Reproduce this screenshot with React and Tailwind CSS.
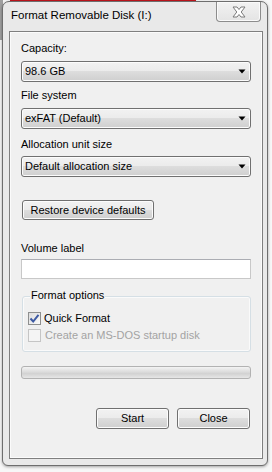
import React from "react";

const btn =
  "border border-[#707070] rounded-[3px] bg-[linear-gradient(#f2f2f2,#ebebeb_50%,#dddddd_50%,#cfcfcf)] shadow-[inset_0_0_0_1px_#fcfcfc]";

function Combo({ value, mt }) {
  return (
    <div className={`${mt} flex h-[21px] items-center justify-between ${btn} pl-[3px] pr-[4px]`}>
      <span className="whitespace-nowrap">{value}</span>
      <svg width="8" height="5" viewBox="0 0 8 5">
        <path d="M0.5 0.5 H7.5 L4 4.5 Z" fill="#000" />
      </svg>
    </div>
  );
}

function Label({ children, mt }) {
  return <div className={`${mt} h-[15px] whitespace-nowrap`}>{children}</div>;
}

export default function App() {
  return (
    <div className="relative w-[272px] h-[472px] overflow-hidden bg-[#f7f7f7] font-['Liberation_Sans',Arial,sans-serif] text-[11px] leading-[15px] text-black">
      <div className="absolute left-[10px] top-0 h-[3px] w-[186px] bg-[#c3141c] shadow-[0_1px_2px_rgba(120,0,0,0.4)]" />
      <div className="absolute left-0 top-0 h-[40px] w-[3px] bg-[#a0a0a0]" />
      <div className="relative ml-[2px] mt-[1px] flex h-[465px] w-[266px] flex-col rounded-t-[7px] rounded-b-[6px] border border-[#6e6e6e] bg-[#e9e9e9] pl-[6px] pr-[4px] pb-[6px] shadow-[0_1px_3px_rgba(0,0,0,0.35)]">
        <div className="flex h-[29px] items-start justify-between">
          <div className="ml-[2px] mt-[6px] whitespace-nowrap text-[11.5px]">Format Removable Disk (I:)</div>
          <div className="mr-[2px] flex h-[20px] w-[45px] items-center justify-center rounded-b-[4px] border border-t-0 border-[#8c8c8c] bg-[linear-gradient(#f2f2f2,#e4e4e4)] shadow-[inset_0_0_0_1px_#fafafa]">
            <svg width="14" height="12" viewBox="0 0 14 12">
              <path
                d="M1 1 H5 L7 3.5 L9 1 H13 L9.2 6 L13 11 H9 L7 8.5 L5 11 H1 L4.8 6 Z"
                fill="#fff"
                stroke="#7a7a7a"
                strokeWidth="1"
                strokeLinejoin="round"
              />
            </svg>
          </div>
        </div>
        <div className="flex flex-1 flex-col border border-[#7f7f7f] bg-[#f0f0f0] px-[11px] shadow-[inset_0_0_0_1px_#fbfbfb]">
          <Label mt="mt-[9px]">Capacity:</Label>
          <Combo value="98.6 GB" mt="mt-[5px]" />
          <Label mt="mt-[6px]">File system</Label>
          <Combo value="exFAT (Default)" mt="mt-[5px]" />
          <Label mt="mt-[8px]">Allocation unit size</Label>
          <Combo value="Default allocation size" mt="mt-[4px]" />
          <div className={`mt-[23px] ml-[1px] flex h-[20px] w-[132px] items-center justify-center whitespace-nowrap ${btn}`}>
            Restore device defaults
          </div>
          <Label mt="mt-[21px]">Volume label</Label>
          <div className="mt-[3px] h-[20px] border border-[#c8c8c8] border-t-[#abadb3] bg-white" />
          <div className="mt-[17px] ml-[1px] flex flex-col rounded-[3px] border border-[#d5dfe5] px-[5px] pb-[7px] shadow-[inset_0_0_0_1px_#fafafa]">
            <span className="-mt-[9px] ml-[2px] h-[15px] self-start bg-[#f0f0f0] px-[1px] whitespace-nowrap">Format options</span>
            <div className="mt-[7px] flex h-[17px] items-center">
              <div className="flex h-[13px] w-[13px] items-center justify-center border border-[#8e8f8f] bg-[linear-gradient(135deg,#dcdcdc,#fbfbfb)]">
                <svg width="11" height="11" viewBox="0 0 11 11">
                  <path d="M1.5 5.5 L4.2 8.5 L9.5 1.8" fill="none" stroke="#3d5aa3" strokeWidth="2" />
                </svg>
              </div>
              <span className="ml-[3px] whitespace-nowrap">Quick Format</span>
            </div>
            <div className="flex h-[17px] items-center">
              <div className="h-[13px] w-[13px] border border-[#c5c5c5] bg-[#f4f4f4]" />
              <span className="ml-[4px] whitespace-nowrap text-[#a3a3a3]">Create an MS-DOS startup disk</span>
            </div>
          </div>
          <div className="mt-[14px] h-[13px] rounded-[3px] border border-[#b2b2b2] bg-[linear-gradient(#f3f3f3,#dcdcdc_45%,#d2d2d2_60%,#e6e6e6)]" />
          <div className="mt-[29px] mr-[1px] flex justify-end gap-[8px]">
            <div className={`flex h-[21px] w-[73px] items-center justify-center ${btn}`}>Start</div>
            <div className={`flex h-[21px] w-[73px] items-center justify-center ${btn}`}>Close</div>
          </div>
        </div>
      </div>
    </div>
  );
}
